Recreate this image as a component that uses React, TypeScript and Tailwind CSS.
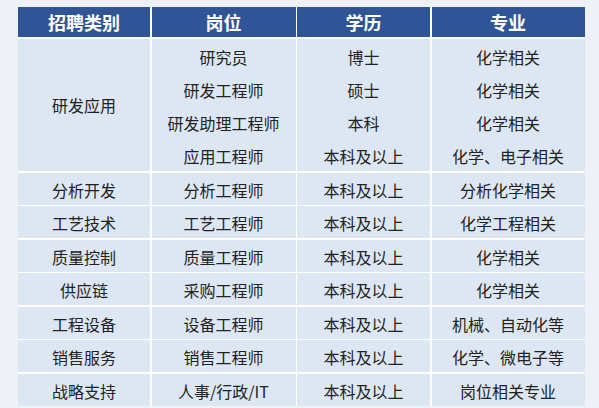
import React from "react";

const groupRows = [
  ["研究员", "博士", "化学相关"],
  ["研发工程师", "硕士", "化学相关"],
  ["研发助理工程师", "本科", "化学相关"],
  ["应用工程师", "本科及以上", "化学、电子相关"],
];

const rows = [
  ["分析开发", "分析工程师", "本科及以上", "分析化学相关"],
  ["工艺技术", "工艺工程师", "本科及以上", "化学工程相关"],
  ["质量控制", "质量工程师", "本科及以上", "化学相关"],
  ["供应链", "采购工程师", "本科及以上", "化学相关"],
  ["工程设备", "设备工程师", "本科及以上", "机械、自动化等"],
  ["销售服务", "销售工程师", "本科及以上", "化学、微电子等"],
  ["战略支持", "人事/行政/IT", "本科及以上", "岗位相关专业"],
];

const headers = ["招聘类别", "岗位", "学历", "专业"];

const cell = "bg-[#dde7f3] flex items-center justify-center text-[16px] text-[#222]";

const App = () => {
  return (
    <div
      className="w-[599px] h-[408px] bg-[#eef2f6] pt-[7px] pl-[18px]"
      style={{ fontFamily: '"Noto Sans CJK SC", "Noto Sans", sans-serif' }}
    >
      <div className="grid w-[566px] grid-cols-[132px_144px_133px_153px] grid-rows-[30px_repeat(11,32px)] gap-[1.5px] bg-white">
        {headers.map((h) => (
          <div
            key={h}
            className="bg-[#2f5597] flex items-center justify-center text-[18px] font-bold text-white"
          >
            {h}
          </div>
        ))}

        {/* 研发应用 group spans four rows */}
        <div className={`${cell} row-span-4`}>研发应用</div>
        {[0, 1, 2].map((col) => (
          <div key={col} className="row-span-4 bg-[#dde7f3] grid grid-rows-4 text-[16px] text-[#222]">
            {groupRows.map((r) => (
              <div key={r[0]} className="flex items-center justify-center pt-[3px]">
                {r[col]}
              </div>
            ))}
          </div>
        ))}

        {rows.map((r) =>
          r.map((t, i) => (
            <div key={r[0] + i} className={`${cell} pt-[2px]`}>
              {t}
            </div>
          ))
        )}
      </div>
    </div>
  );
};

export default App;
